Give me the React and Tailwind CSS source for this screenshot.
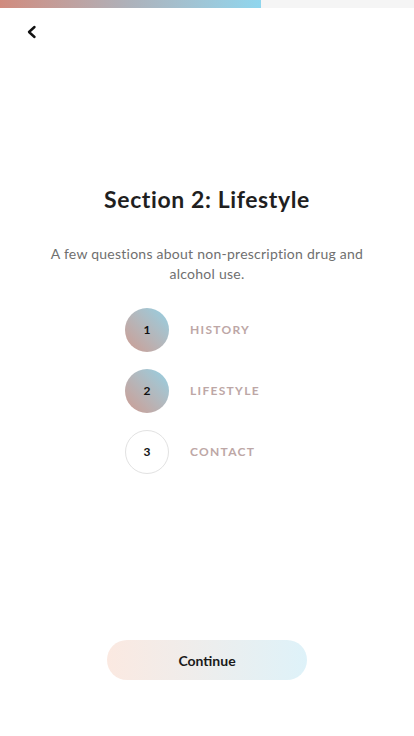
import React from "react";

const steps = [
    { n: 1, label: "HISTORY", done: true },
    { n: 2, label: "LIFESTYLE", done: true },
    { n: 3, label: "CONTACT", done: false },
];

export default function App() {
    return (
        <div className="w-[414px] h-[736px] bg-white flex flex-col font-['Lato',sans-serif] text-[#1f1f1f]">
            <div className="h-2 w-full bg-[#f5f5f5] flex">
                <div className="h-full w-[261px] bg-gradient-to-r from-[#d08b7e] via-[#adb2bb] to-[#8fd6ee]" />
            </div>

            <div className="px-6 pt-4 h-[42px]">
                <svg width="16" height="16" viewBox="0 0 16 16" fill="none">
                    <path d="M10.5 3 L5 8 L10.5 13" stroke="#111" strokeWidth="2.4" strokeLinecap="round" strokeLinejoin="round" />
                </svg>
            </div>

            <h1 className="mt-[135px] text-center text-[23px] font-bold leading-7 tracking-[0.6px]">Section 2: Lifestyle</h1>

            <p className="mt-[31px] px-[46px] text-center text-[14px] leading-[20px] tracking-[0.25px] text-[#6f6f6f]">
                A few questions about non-prescription drug and alcohol use.
            </p>

            <div className="mt-[24px] flex flex-col gap-[17px] pl-[125px]">
                {steps.map((s) => (
                    <div key={s.n} className="flex items-center gap-[21px]">
                        <div
                            className={
                                s.done
                                    ? "w-11 h-11 rounded-full flex items-center justify-center bg-gradient-to-tr from-[#cc9b91] to-[#92d0e4] text-[12px] font-bold text-[#111]"
                                    : "w-11 h-11 rounded-full flex items-center justify-center border border-[#e2e2e2] bg-white text-[12px] font-bold text-[#111]"
                            }
                        >
                            {s.n}
                        </div>
                        <span className="text-[12px] font-bold tracking-[1.3px] text-[#bda7a6]">{s.label}</span>
                    </div>
                ))}
            </div>

            <div className="mt-auto mb-[56px] flex justify-center">
                <button className="w-[200px] h-10 rounded-full bg-gradient-to-r from-[#fbe9e1] to-[#def2f9] text-[14px] font-bold text-[#1a1a1a]">
                    Continue
                </button>
            </div>
        </div>
    );
}
